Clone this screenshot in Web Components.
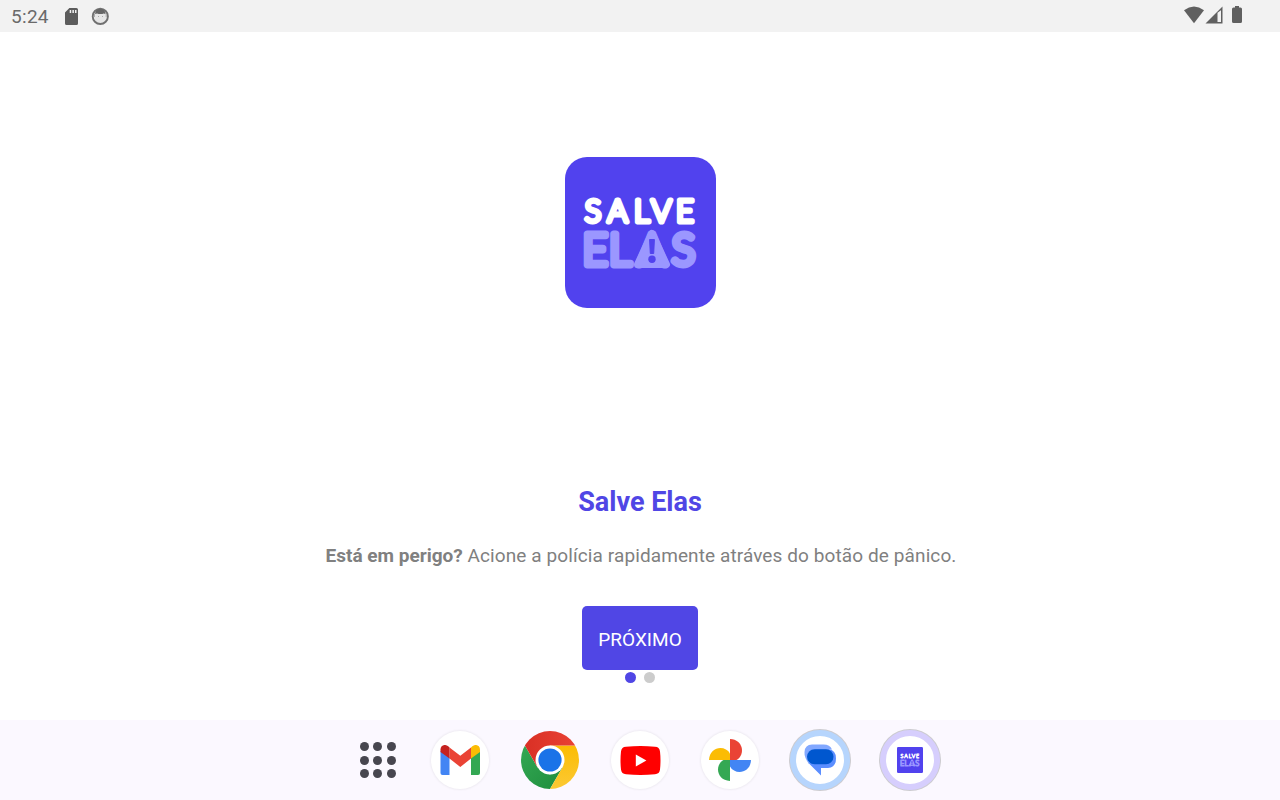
<!DOCTYPE html>
<html lang="pt-BR"><head><meta charset="utf-8"><title>Salve Elas</title>
<style>html,body{margin:0;height:100%;overflow:hidden;background:#fff;font-family:Roboto,"Open Sans",sans-serif}</style></head>
<body><tablet-screen></tablet-screen>
<script>
const define=(name,html)=>customElements.define(name,class extends HTMLElement{
  constructor(){super();const t=document.createElement('template');t.innerHTML=html;
    this.attachShadow({mode:'open'}).appendChild(t.content.cloneNode(true));}
});

define('status-bar',`<style>
:host{display:flex;box-sizing:border-box;height:32px;background:#f2f2f2;color:#6a6a6a;padding:0 37px 0 11px;align-items:center;justify-content:space-between}
div{display:flex;align-items:center}svg{display:block}
span{font-size:19px;line-height:33px;height:32px;letter-spacing:.3px;width:53px}
</style>
<div><span>5:24</span>
<svg width="50" height="32" viewBox="64 0 50 32"><path fill="#5c5c5c" fill-rule="evenodd" d="M69.4 8H76.400Q78 8 78 9.600V23.400Q78 25 76.400 25H66.600Q65 25 65 23.400V12.400zM69.700 10V13H71.200V10zM72.400 10V13H73.900V10zM75 10V13H76.500V10z"/>
<circle cx="100.300" cy="16.400" r="7.600" fill="#e6e6e6" stroke="#707070" stroke-width="1.900"/><path fill="#666" d="M95 14Q95.500 9 100.300 9Q105 9 105.600 14Q103 13 102.500 14H98.500Q97.500 13 95 14z"/><path d="M94.500 14V17M106.200 14V17M98 16.500h1M102 16.500h1" stroke="#aaa"/></svg></div>
<svg width="60" height="32" viewBox="1183 0 60 32" fill="#606060"><path d="M1184 10.200Q1194 2.800 1204 10.200L1194 23.200z"/><path fill-rule="evenodd" d="M1222.500 6.500V23.500H1205.500zM1217.500 12.800V22H1221V10.200z"/><path d="M1235 6h4v1.500h1.500q1.500 0 1.500 1.500v12.500q0 1.500-1.500 1.500h-7q-1.500 0-1.500-1.500v-12.500q0-1.500 1.500-1.500h1.500z"/></svg>`);

define('brand-logo',`<style>:host{display:block;width:151px;height:151px}svg{display:block;width:100%;height:100%}
rect{rx:var(--logo-radius,22px)}
text{font-family:Lato,sans-serif;font-weight:300;stroke-linejoin:round;stroke-linecap:round}
.a{font-size:30.800px;fill:#fff;stroke:#fff;stroke-width:4.800px}.b{font-size:43.800px;fill:#9b97ff;stroke:#9b97ff;stroke-width:6.800px}</style>
<svg viewBox="565 157 151 151"><rect x="565" y="157" width="151" height="151" fill="#5142ee"/>
<text class="a" x="584.800 607.500 634 651.200 676" y="221.700">SALVE</text>
<text class="b" x="582.500 609 637.500 671.700" y="264.600">ELAS</text>
<path d="M652 233.500L666.500 264.500H637.500z" fill="#9b97ff" stroke="#9b97ff" stroke-width="7" stroke-linejoin="round"/>
<path d="M649.600 239.500h4.800l-.7 14h-3.400z" fill="#5142ee" stroke="#5142ee" stroke-linejoin="round"/><circle cx="652" cy="259.200" r="3.700" fill="#5142ee"/></svg>`);

define('primary-button',`<style>:host{display:block}button{display:block;width:116px;height:64px;padding:3px 0 0;border:0;border-radius:5px;background:#5046e5;color:#fff;font:400 19px Roboto,sans-serif;letter-spacing:.05px}</style><button><slot></slot></button>`);
define('page-dots',`<style>:host{display:flex;gap:8px;justify-content:center;margin-top:2px}i{width:11px;height:11px;border-radius:50%;background:#ccc}i.on{background:#5046e5}</style><i class="on"></i><i></i>`);

define('onboarding-page',`<style>
:host{display:flex;flex:1;flex-direction:column;align-items:center;background:#fff}
brand-logo{margin-top:125px}
h1{margin:174px 0 0;font-size:27px;line-height:40px;font-weight:700;color:#5046e5}
p{margin:18px 0 0;padding-left:2px;font-size:19px;line-height:32px;color:#808080;white-space:nowrap;letter-spacing:.1px}
b{font-weight:700;letter-spacing:0}
primary-button{margin-top:34px}
</style><brand-logo></brand-logo><h1>Salve Elas</h1><p><b>Está em perigo?</b> Acione a polícia rapidamente atráves do botão de pânico.</p><primary-button>PRÓXIMO</primary-button><page-dots></page-dots>`);

define('dock-item',`<style>:host{display:flex;align-items:center;justify-content:center;width:58px;height:58px;border-radius:50%;background:#fff;box-shadow:0 0 2px 1px #0000000d}
:host([ring]){box-sizing:border-box;width:60px;height:60px;border:6.500px solid var(--ring);box-shadow:0 0 0 1px #cccbd0}
:host([plain]){background:none;box-shadow:none}::slotted(svg){display:block;flex:none}::slotted(brand-logo){width:26px;height:26px;--logo-radius:7px}</style><slot></slot>`);

define('app-dock',`<style>
:host{display:flex;height:80px;background:#fbf8ff;align-items:center;justify-content:center}
nav{display:flex;align-items:center;gap:32px;width:592px}
nav>*{flex:none}.grid{display:grid;grid-template-columns:repeat(3,9px);gap:4.300px;width:36px;margin:0 3px 0 16px}.grid i{width:9px;height:9px;border-radius:50%;background:#47464f}
dock-item[ring]{margin:0 -1px}
</style><nav><div class="grid"><i></i><i></i><i></i><i></i><i></i><i></i><i></i><i></i><i></i></div>
<dock-item><svg width="40" height="30" viewBox="0 0 40 30"><path fill="#4285f4" d="M.5 6V28Q.5 30 2.500 30H9.500V12z"/><path fill="#34a853" d="M31 12V30H38Q40 30 40 28V6z"/><path fill="#ea4335" d="M9.500 2.500L20.300 10.800 31 2.500V13.500L20.300 22 9.500 13.500z"/><path fill="#c5221f" d="M.5 7V4.500C.5.400 5-1.500 8.200 1.300L9.500 2.500V13.500z"/><path fill="#fbbc04" d="M40 7V4.500C40 .400 35.500-1.500 32.300 1.300L31 2.500V13.500z"/></svg></dock-item>
<dock-item plain><svg width="58" height="58" viewBox="-29 -29 58 58"><defs><clipPath id="c"><circle r="29"/></clipPath><linearGradient id="r"><stop stop-color="#d93025"/><stop offset="1" stop-color="#ea4335"/></linearGradient><linearGradient id="g" x1="1" x2="0" y1="1" y2="0"><stop stop-color="#1e8e3e"/><stop offset="1" stop-color="#34a853"/></linearGradient><linearGradient id="y" x1="0" x2="0" y1="1" y2="0"><stop stop-color="#fcc934"/><stop offset="1" stop-color="#fbbc04"/></linearGradient></defs><g clip-path="url(#c)"><path fill="url(#g)" d="M-25.100-14.500L-12.600 7.250L0 14.500L12.560 7.250L0 29H-29V-14.500z"/><path fill="url(#y)" d="M0-14.500H29V29H0L12.560 7.250z"/><path fill="url(#r)" d="M-25.100-14.500V-29H29V-14.500H0L-12.560 7.250z"/></g><circle r="14.500" fill="#fff"/><circle r="11.600" fill="#1a73e8"/></svg></dock-item>
<dock-item><svg width="41" height="29" viewBox="0 0 41 29"><path fill="red" d="M6 .8Q20.500-.6 35 .8Q39.500 1 40 5.500Q41 14.500 40 23.500Q39.500 28 35 28.200Q20.500 29.600 6 28.200Q1.500 28 1 23.500Q0 14.500 1 5.500Q1.500 1 6 .8z"/><path fill="#fff" d="M15.800 8.500V20.500L26.400 14.500z"/></svg></dock-item>
<dock-item><svg width="42" height="42" viewBox="-21 -21 42 42"><path fill="#ea4335" d="M0 0V-21C13.500-20.500 15.500-5 6.500 0z"/><path fill="#4285f4" d="M0 0H21C20.500 13.500 5 15.500 0 6.500z"/><path fill="#34a853" d="M0 0V21C-13.500 20.500-15.500 5-6.500 0z"/><path fill="#fbbc04" d="M0 0H-21C-20.500-13.500-5-15.500 0-6.500z"/></svg></dock-item>
<dock-item ring style="--ring:#b6d5fd"><svg width="32" height="32" viewBox="0 0 32 32"><path fill="#5b8eff" d="M9 5H24.500Q32 6 32 14.500Q32 23.500 24 24H17V31.500L4.500 19z"/><path fill="#82a8ff" d="M8 .5H19.500Q26 .5 28 5.500H11L5 20Q0 13 .5 8Q1 .5 8 .5z"/><rect x="3" y="5.300" width="26.500" height="15" rx="7.500" fill="#0057cf"/></svg></dock-item>
<dock-item ring style="--ring:#d6cefd"><brand-logo></brand-logo></dock-item></nav>`);

define('tablet-screen',`<style>:host{display:flex;flex-direction:column;width:1280px;height:800px}</style><status-bar></status-bar><onboarding-page></onboarding-page><app-dock></app-dock>`);
</script></body></html>
